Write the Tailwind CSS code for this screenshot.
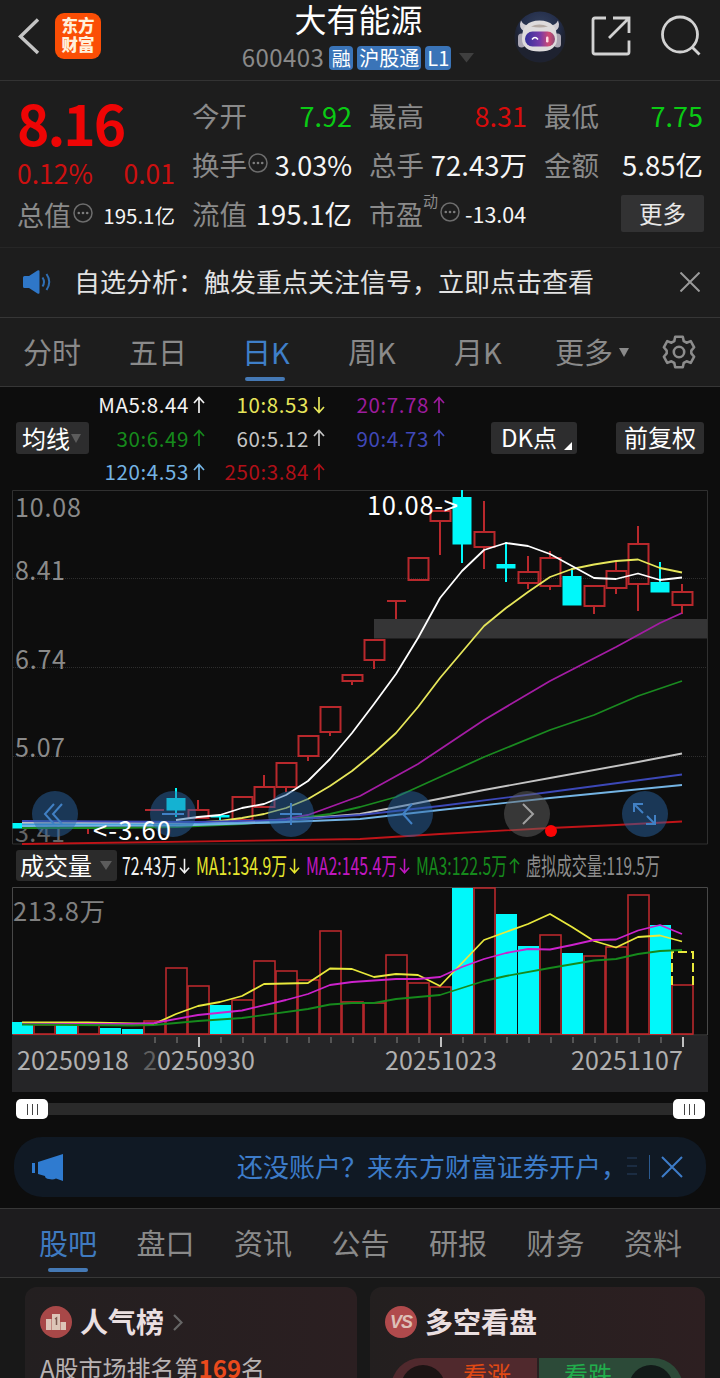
<!DOCTYPE html>
<html lang="zh-CN">

<head>
    <meta charset="UTF-8">
    <meta name="viewport" content="width=device-width, initial-scale=1.0">
    <title>大有能源 600403</title>
    <script src="https://cdn.jsdelivr.net/npm/@tailwindcss/browser@4"></script>
</head>

<body class="w-[720px] h-[1378px] overflow-hidden bg-[#0d0d0d] font-['Noto_Sans_CJK_SC',sans-serif] text-white whitespace-nowrap">

    <!-- Shared arrows -->
    <svg class="hidden">
        <symbol id="up" viewBox="0 0 12 18"><path d="M6 17V1.5M1 7l5-5.5L11 7" fill="none" stroke="currentColor" stroke-width="1.7" /></symbol>
        <symbol id="down" viewBox="0 0 12 18"><path d="M6 1v15.5M1 11l5 5.5 5-5.5" fill="none" stroke="currentColor" stroke-width="1.7" /></symbol>
        <symbol id="dots" viewBox="0 0 20 20">
            <circle cx="10" cy="10" r="9" fill="none" stroke="#6d6d6d" stroke-width="1.5" />
            <g fill="#7d7d7d"><circle cx="5.8" cy="10" r="1.3" /><circle cx="10" cy="10" r="1.3" /><circle cx="14.2" cy="10" r="1.3" /></g>
        </symbol>
    </svg>

    <!-- Header -->
    <header class="h-[81px] bg-[#1d1d1d] border-b border-[#333] flex justify-between">
        <div class="w-[203px] pl-[17px] pt-[13px] flex items-start">
            <svg class="w-6 h-[46px]" viewBox="0 0 24 46" fill="none" stroke="#c4c4c4" stroke-width="3.4"><path d="M21 6.5L3.5 23.5 21 40" /></svg>
            <div class="ml-[14px] w-[46px] h-[46px] rounded-[9px] bg-[#fb4e05] text-[#fff1dc] font-black text-[16.5px] leading-[19px] text-center pt-[3px]">东方<br>财富</div>
        </div>
        <div class="flex flex-col items-center">
            <h1 class="text-[32px] leading-[37px]">大有能源</h1>
            <div class="flex items-center h-[42px] ml-[-1px]">
                <span class="text-[24px] leading-[38px] -mt-[2px] tracking-[0.45px] text-[#8a8a8a]">600403</span>
                <span class="ml-[5px] h-6 w-6 rounded-[4px] bg-[#3a74b8] text-[19px] leading-[23px] text-center">融</span>
                <span class="ml-[4px] h-6 w-[64px] rounded-[4px] bg-[#3a74b8] text-[20px] leading-[23px] text-center">沪股通</span>
                <span class="ml-[4px] h-6 w-[26px] rounded-[4px] bg-[#3a74b8] text-[20px] leading-[23px] text-center">L1</span>
                <svg class="ml-[8px] w-[15px] h-[10px]" viewBox="0 0 15 10"><path d="M0 0h15L7.500 9.500z" fill="#3f3f3f" /></svg>
            </div>
        </div>
        <div class="w-[206px] flex items-start pt-[10px]">
            <svg class="w-[54px] h-[54px] -ml-[1px]" viewBox="0 0 54 54">
                <defs>
                    <linearGradient id="visor" x1="0" x2="1"><stop offset="0" stop-color="#33309a" /><stop offset=".5" stop-color="#763aa8" /><stop offset=".8" stop-color="#d04a72" /><stop offset="1" stop-color="#8a4a78" /></linearGradient>
                    <radialGradient id="halo" cy=".3"><stop offset="0" stop-color="#35425f" /><stop offset=".75" stop-color="#232d49" /><stop offset="1" stop-color="#1e2230" /></radialGradient>
                </defs>
                <circle cx="27" cy="27" r="25.500" fill="url(#halo)" />
                <g transform="translate(0 1.500)">
                    <path d="M8 9q-3 7 3 11l7-6q-7 1-10-5zM45 9q3 7-3 11l-7-6q7 1 10-5z" fill="#cfccd2" />
                    <rect x="5" y="22" width="7" height="14" rx="3.500" fill="#aaa6b2" />
                    <rect x="41" y="22" width="7" height="14" rx="3.500" fill="#aaa6b2" />
                    <path d="M9 27Q9 9 26.500 9 44 9 44 27 44 40 26.500 40 9 40 9 27z" fill="#dedbdc" />
                    <path d="M18 15q8-4 17 0-8 2-17 0z" fill="#b5aaa4" />
                    <rect x="12" y="20" width="30" height="15" rx="7.500" fill="url(#visor)" />
                    <path d="M19 28q3-4 6 0" fill="none" stroke="#fff" stroke-width="1.500" />
                    <rect x="33" y="25" width="2.500" height="6" rx="1.200" fill="#ffd8e2" />
                </g>
            </svg>
            <svg class="ml-[23px] mt-[5px] w-[42px] h-[42px]" viewBox="0 0 42 42" fill="none" stroke="#d2d2d2" stroke-width="2.800">
                <path d="M16 3H5q-2 0-2 2v32q0 2 2 2h32q2 0 2-2V25.500M23 3h16v15M38.500 3.500L19 23" />
            </svg>
            <svg class="ml-[28px] mt-[5px] w-[42px] h-[42px]" viewBox="0 0 42 42" fill="none" stroke="#d2d2d2" stroke-width="2.800">
                <circle cx="20" cy="19.500" r="17.500" /><path d="M32 32l7.500 7.500" />
            </svg>
        </div>
    </header>

    <!-- Quote -->
    <section class="h-[167px] bg-[#1d1d1d] border-b border-[#262626] pt-[10px] pl-[17px] grid grid-cols-[158px_160px_158px_159px] gap-x-[17px] text-[27px] leading-[49px] text-[#8a8a8a] content-start">
        <div>
            <div class="text-[55px] leading-[62px] font-bold text-[#ee0505] tracking-[-2px]">8.16</div>
            <div class="flex justify-between leading-[40px] text-[26.5px] text-[#cc1010]"><span>0.12%</span><span>0.01</span></div>
            <div class="flex items-center justify-between leading-[44px]"><span class="flex items-center">总值<svg class="w-5 h-5 ml-[2px] -mt-1"><use href="#dots" /></svg></span><span class="text-[20.5px] text-[#f5f5f5]">195.1亿</span></div>
        </div>
        <div>
            <div class="flex justify-between"><span class="text-[27.5px]">今开</span><span class="text-[#0acb14]">7.92</span></div>
            <div class="flex items-center justify-between"><span class="flex items-center text-[27.5px]">换手<svg class="w-5 h-5 ml-[1px] -mt-1"><use href="#dots" /></svg></span><span class="text-[#f5f5f5]">3.03%</span></div>
            <div class="flex justify-between"><span class="text-[27.5px]">流值</span><span class="text-[27.5px] text-[#f5f5f5]">195.1亿</span></div>
        </div>
        <div>
            <div class="flex justify-between"><span class="text-[27.5px]">最高</span><span class="text-[#d80c0c]">8.31</span></div>
            <div class="flex justify-between"><span class="text-[27.5px]">总手</span><span class="text-[27.5px] text-[#f5f5f5]">72.43万</span></div>
            <div class="flex items-center"><span>市盈</span><span class="self-start text-[15px] leading-[24px]">动</span><svg class="w-5 h-5 ml-[2px] -mt-1"><use href="#dots" /></svg><span class="text-[21.5px] ml-[5px] text-[#f5f5f5]">-13.04</span></div>
        </div>
        <div>
            <div class="flex justify-between"><span class="text-[27.5px]">最低</span><span class="text-[#0acb14]">7.75</span></div>
            <div class="flex justify-between"><span class="text-[27.5px]">金额</span><span class="text-[27.5px] text-[#f5f5f5]">5.85亿</span></div>
            <button class="block ml-auto mt-[6px] -mr-px w-[83px] h-[37px] rounded-[2px] bg-[#323233] text-[#e8e8e8] text-[23.5px] leading-[35px]">更多</button>
        </div>
    </section>

    <!-- Notice -->
    <section class="h-[70px] bg-[#1d1d1d] border-b border-[#363636] flex items-center pl-[22px] pr-[20px]">
        <svg class="w-[30px] h-[26px] -mt-[2px]" viewBox="0 0 30 26">
            <path d="M1 8.500q0-1.500 1.500-1.500H7L15.500 1.500q2-1 2 1v21q0 2-2 1L7 19H2.500Q1 19 1 17.500z" fill="#2f77c8" />
            <path d="M20.500 8.500q3 4.500 0 9M24.500 5q5.500 8 0 16" fill="none" stroke="#2f6fb5" stroke-width="2" />
        </svg>
        <p class="ml-[22px] -mt-[4px] text-[26px] text-[#e2e2e2]">自选分析：触发重点关注信号，立即点击查看</p>
        <svg class="ml-auto -mt-[2px] w-5 h-5" viewBox="0 0 20 20" stroke="#999" stroke-width="2"><path d="M.5.5l19 19M19.500.5l-19 19" /></svg>
    </section>

    <!-- Period tabs -->
    <nav class="h-[69px] bg-[#1d1d1d] border-b border-[#363636] flex items-center pl-[23px] text-[29px] leading-[66px] text-[#8a8a8a]">
        <span class="-mt-[2px] w-[106px]">分时</span>
        <span class="-mt-[2px] w-[113px]">五日</span>
        <span class="-mt-[2px] relative w-[106px] text-[#3f7fc9]">日K<i class="absolute left-[3px] bottom-[3px] w-10 h-1 rounded-full bg-[#4579b5]"></i></span>
        <span class="-mt-[2px] w-[106px]">周K</span>
        <span class="-mt-[2px] w-[101px]">月K</span>
        <span class="-mt-[2px]">更多</span>
        <svg class="ml-[6px] w-[10px] h-[9px]" viewBox="0 0 10 9"><path d="M0 0h10L5 9z" fill="#8a8a8a" /></svg>
        <svg class="ml-[31px] w-[38px] h-[36px]" viewBox="-20 -19 40 38" fill="none" stroke="#8c8c8c" stroke-width="2.700" stroke-linejoin="round">
            <path d="M-4-16H4L5-11.500 8-9.800 12.400-11.500 16-5 13-1.500V1.500L16 5 12.400 11.500 8 9.800 5 11.500 4 16H-4L-5 11.500-8 9.800-12.400 11.500-16 5-13 1.500V-1.500L-16-5-12.400-11.500-8-9.800-5-11.500z" />
            <circle r="5.500" />
        </svg>
    </nav>

    <!-- Moving average legend -->
    <section class="h-[103px] flex items-start">
        <div class="ml-4 mt-[35px] w-[73px] h-[32px] rounded-[3px] bg-[#2d2d2e] flex items-center pl-[6px] text-[24px] leading-[30px]">均线<svg class="ml-[1px] w-[10px] h-[9px]" viewBox="0 0 10 9"><path d="M0 0h10L5 9z" fill="#5c5c5c" /></svg></div>
        <div class="ml-[1px] mt-[1px] grid grid-cols-[115px_120px_120px] text-[20.5px] leading-[33.5px] tracking-[0.6px]">
            <span class="flex items-center justify-end gap-1 text-[#f2f2f2]">MA5:8.44<svg class="w-3 h-[18px]"><use href="#up" /></svg></span>
            <span class="flex items-center justify-end gap-1 text-[#e6e65a]">10:8.53<svg class="w-3 h-[18px]"><use href="#down" /></svg></span>
            <span class="flex items-center justify-end gap-1 text-[#9d1c9d]">20:7.78<svg class="w-3 h-[18px]"><use href="#up" /></svg></span>
            <span class="flex items-center justify-end gap-1 text-[#168a1c]">30:6.49<svg class="w-3 h-[18px]"><use href="#up" /></svg></span>
            <span class="flex items-center justify-end gap-1 text-[#c4c4c4]">60:5.12<svg class="w-3 h-[18px]"><use href="#up" /></svg></span>
            <span class="flex items-center justify-end gap-1 text-[#4048b8]">90:4.73<svg class="w-3 h-[18px]"><use href="#up" /></svg></span>
            <span class="flex items-center justify-end gap-1 text-[#74b4e4]">120:4.53<svg class="w-3 h-[18px]"><use href="#up" /></svg></span>
            <span class="flex items-center justify-end gap-1 text-[#b01018]">250:3.84<svg class="w-3 h-[18px]"><use href="#up" /></svg></span>
        </div>
        <div class="relative ml-[46px] mt-[35px] w-[86px] h-[32px] rounded-[3px] bg-[#2d2d2e] pl-[10px] text-[24px] leading-[30px]">DK点<svg class="absolute right-[5px] bottom-1 w-[8px] h-[8px]" viewBox="0 0 8 8"><path d="M8 0v8H0z" fill="#fff" /></svg></div>
        <div class="ml-[39px] mt-[35px] w-[88px] h-[32px] rounded-[3px] bg-[#2d2d2e] text-center text-[24px] leading-[30px]">前复权</div>
    </section>

    <!-- Candles -->
    <svg class="block w-[720px] h-[356px]" viewBox="0 490 720 356">
        <path d="M12.500 844V490.500H707.500V844z" fill="none" stroke="#303030" />
        <path d="M13 578.500H707M13 667.500H707M13 756.500H707" stroke="#2e2e2e" stroke-dasharray="1 1" />
        <g fill="#8a8a8a" font-size="25">
            <text x="15" y="517" textLength="66">10.08</text>
            <text x="15" y="580" textLength="50">8.41</text>
            <text x="15" y="669" textLength="51">6.74</text>
            <text x="15" y="757" textLength="50">5.07</text>
            <text x="15" y="842" textLength="50" fill="#666">3.41</text>
        </g>
        <rect x="374" y="619" width="333" height="19.500" fill="#353536" />
        <g id="candles"></g>
        <g id="averages"></g>
        <g fill="#2a67a8" fill-opacity=".48">
            <circle cx="55" cy="814" r="23" /><circle cx="173" cy="814" r="23" /><circle cx="291" cy="814" r="23" /><circle cx="410" cy="814" r="23" />
            <circle cx="527" cy="814" r="23" fill="#666" /><circle cx="645" cy="814" r="23" />
        </g>
        <g fill="none" stroke="#4180c4" stroke-width="2">
            <path d="M54 804l-9 10 9 10M62 804l-9 10 9 10M162 814h22M280 814h22M291 803v22M412 804l-9 10 9 10" />
            <path d="M523 804l10 10-10 10" stroke="#a0a0a0" />
            <path d="M634 812v-8h9M635 805l8 8M655 815v9h-9M655 824l-8-8" />
        </g>
        <circle cx="551" cy="831" r="6" fill="#fb0505" />
        <g font-size="25.500" fill="#fff">
            <text x="367" y="515" textLength="91">10.08-&gt;</text>
            <text x="93" y="840" textLength="78">&lt;-3.60</text>
        </g>
    </svg>

    <!-- Volume legend -->
    <section class="h-[41px] flex items-start">
        <div class="ml-4 mt-[4px] w-[101px] h-[31px] rounded-[3px] bg-[#2b2b2b] flex items-center pl-[4px] text-[24px] leading-[28px]"><span class="-mt-[2px]">成交量</span><svg class="ml-[8px] w-[12px] h-[9px]" viewBox="0 0 12 9"><path d="M0 0h12L6 9z" fill="#5c5c5c" /></svg></div>
        <svg class="w-[603px] h-[41px]" viewBox="117 846 603 41" font-size="24">
            <g fill="#f2f2f2" color="#f2f2f2"><text x="122" y="875" textLength="55" lengthAdjust="spacingAndGlyphs">72.43万</text><use href="#down" x="179" y="856" width="11" height="20" /></g>
            <g fill="#e6e62e" color="#e6e62e"><text x="196" y="875" textLength="91" lengthAdjust="spacingAndGlyphs">MA1:134.9万</text><use href="#down" x="289" y="856" width="11" height="20" /></g>
            <g fill="#c018c0" color="#c018c0"><text x="306" y="875" textLength="91" lengthAdjust="spacingAndGlyphs">MA2:145.4万</text><use href="#down" x="399" y="856" width="11" height="20" /></g>
            <g fill="#168a1c" color="#168a1c"><text x="416" y="875" textLength="91" lengthAdjust="spacingAndGlyphs">MA3:122.5万</text><use href="#up" x="509" y="856" width="11" height="20" /></g>
            <text x="526" y="875" textLength="134" lengthAdjust="spacingAndGlyphs" fill="#8e8e8e">虚拟成交量:119.5万</text>
        </svg>
    </section>

    <!-- Volume -->
    <svg class="block w-[720px] h-[205px]" viewBox="0 887 720 205">
        <path d="M12.500 1035V887.500H707.500V1035z" fill="none" stroke="#484848" />
        <text x="13" y="921" font-size="25.500" fill="#808080" textLength="92">213.8万</text>
        <g id="volumes"></g>
        <path d="M672 985V952H693V985" fill="none" stroke="#e8e83c" stroke-width="2" stroke-dasharray="9 4" />
        <g id="volumeAverages"></g>
        <rect x="12" y="1036" width="696" height="57" fill="#252527" />
        <g id="ticks"></g>
        <g fill="#b0b0b0" font-size="25">
            <text x="17" y="1070" textLength="112">20250918</text>
            <text x="143" y="1070" textLength="112"><tspan fill="#606060">2</tspan>0250930</text>
            <text x="385" y="1070" textLength="112">20251023</text>
            <text x="571" y="1070" textLength="112">20251107</text>
        </g>
    </svg>

    <!-- Range slider -->
    <div class="h-[45px] pt-[7px]">
        <div class="ml-4 w-[689px] h-5 flex items-center">
            <div class="w-8 h-5 rounded-[5px] bg-white flex items-center justify-center gap-[4px]"><i class="w-px h-[11px] bg-[#444]"></i><i class="w-px h-[11px] bg-[#444]"></i><i class="w-px h-[11px] bg-[#444]"></i></div>
            <div class="flex-1 h-3 bg-[#2a2a2a]"></div>
            <div class="w-8 h-5 rounded-[5px] bg-white flex items-center justify-center gap-[4px]"><i class="w-px h-[11px] bg-[#444]"></i><i class="w-px h-[11px] bg-[#444]"></i><i class="w-px h-[11px] bg-[#444]"></i></div>
        </div>
    </div>

    <!-- Promo -->
    <div class="ml-[14px] w-[692px] h-[60px] rounded-[28px] bg-[#101924] flex items-center text-[#3d7cc9]">
        <svg class="ml-[18px] w-[31px] h-[27px]" viewBox="0 0 31 27" fill="#2f7bd0"><path d="M0 9h3v10H0zM6 8L31 0v27l-7-2.500q-3 1.500-7 .5-4-.5-4-3L6 20z" /></svg>
        <span class="ml-[174px] -mt-[4px] text-[26px]">还没账户？来东方财富证券开户，</span>
        <span class="w-[10px] h-5 bg-[repeating-linear-gradient(#1b2c42_0_2px,#101924_2px_8px)]"></span>
        <i class="ml-[12px] w-px h-6 bg-[#2b5a90]"></i>
        <svg class="ml-[11px] w-[22px] h-[22px]" viewBox="0 0 22 22" stroke="#3d7cc9" stroke-width="2"><path d="M1 1l20 20M21 1L1 21" /></svg>
    </div>

    <!-- Info tabs -->
    <nav class="mt-[11px] h-[70px] bg-[#1d1c1e] border-y border-[#373737] flex pl-[39px] text-[29px] leading-[66px] text-[#8a8a8a]">
        <span class="relative w-[97.5px] text-[#3f7ac0]">股吧<i class="absolute left-[9px] bottom-[5px] w-10 h-1 rounded-full bg-[#4579b5]"></i></span>
        <span class="w-[97.5px]">盘口</span>
        <span class="w-[97.5px]">资讯</span>
        <span class="w-[97.5px]">公告</span>
        <span class="w-[97.5px]">研报</span>
        <span class="w-[97.5px]">财务</span>
        <span>资料</span>
    </nav>

    <!-- Cards -->
    <section class="h-[100px] bg-[#181818] pt-[9px] pl-[25px] flex gap-[13px]">
        <div class="w-[332px] h-[120px] rounded-t-[12px] bg-linear-to-r from-[#231f20] to-[#2b1f21] pl-[15px] pt-[15px]">
            <div class="flex items-center h-[40px]">
                <svg class="w-8 h-8" viewBox="0 0 32 32"><circle cx="16" cy="16" r="16" fill="#a84848" /><path d="M6 13h5.500v11H6zM12 8h8v16h-8zM20.500 16H26v8h-5.500z" fill="#ddc5b8" /><path d="M15 13l1.500-1v7" fill="none" stroke="#7d5a50" stroke-width="1.500" /></svg>
                <span class="ml-[8px] -mt-[2px] text-[28px] font-bold text-[#eadfe0]">人气榜</span>
                <svg class="ml-[9px] w-[10px] h-[17px]" viewBox="0 0 10 17" fill="none" stroke="#666" stroke-width="2.200"><path d="M1 1l7.500 7.500L1 16" /></svg>
            </div>
            <p class="mt-[9px] text-[24px] leading-[34px] text-[#b8b2b2]">A股市场排名第<b class="text-[#ea4a1c]">169</b>名</p>
        </div>
        <div class="w-[335px] h-[120px] rounded-t-[12px] bg-linear-to-r from-[#231f1f] to-[#2d1f21] pl-[15px] pt-[15px]">
            <div class="flex items-center h-[40px]">
                <div class="w-8 h-8 rounded-full bg-[#b04a4c] text-[#ddc0b8] text-[18px] leading-[32px] text-center font-bold italic tracking-[-1px] font-['Liberation_Sans',sans-serif]">VS</div>
                <span class="ml-[8px] -mt-[2px] text-[28px] font-bold text-[#eadfe0]">多空看盘</span>
            </div>
            <div class="mt-[16px] ml-[6px] w-[292px] h-[60px] flex text-[24px] leading-[32px]">
                <div class="relative w-[146px] rounded-tl-[30px] bg-[#50292d] pl-[72px] text-[#e04a14]">看涨<i class="absolute left-[10px] top-[7px] w-[44px] h-[44px] rounded-full bg-[#1c1414]"></i></div>
                <div class="relative ml-[2px] w-[144px] rounded-tr-[30px] bg-[#2c4a38] pl-[25px] text-[#22ae4c]">看跌<i class="absolute right-[10px] top-[7px] w-[44px] h-[44px] rounded-full bg-[#121a18]"></i></div>
            </div>
        </div>
    </section>

    <script>
        const RED = '#b8282c';
        const CYAN = '#00f8fa';

        // x, body top, body bottom, high, low, falling
        const candles = [
            [22, 823, 828, 823, 828, 1], [88, 829, 829, 829, 834, 0], [154, 810, 810, 810, 810, 0], [176, 798, 810, 788, 817, 1],
            [198, 810, 818, 800, 818, 0], [220, 815, 817, 815, 820, 1], [242, 797, 820, 797, 820, 0], [264, 787, 807, 775, 807, 0],
            [286, 763, 787, 763, 792, 0], [308, 736, 756, 736, 761, 0], [330, 707, 732, 707, 736, 0], [352, 675, 681, 675, 685, 0],
            [374, 640, 660, 640, 669, 0], [396, 601, 601, 601, 619, 0], [418, 558, 580, 558, 580, 0], [440, 511, 521, 511, 555, 0],
            [462, 497, 544, 490, 563, 1], [484, 532, 547, 501, 569, 0], [506, 564, 568, 542, 582, 1], [528, 572, 583, 556, 589, 0],
            [550, 558, 586, 551, 590, 0], [572, 576, 605, 568, 605, 1], [594, 586, 606, 586, 614, 0], [616, 571, 588, 562, 594, 0],
            [638, 544, 584, 526, 611, 0], [660, 582, 592, 562, 592, 1], [682, 592, 605, 584, 614, 0]
        ];

        document.getElementById('candles').innerHTML = candles.map(([x, top, bottom, high, low, falling]) => {
            const color = falling ? CYAN : RED;
            const wick = `<path d="M${x} ${high}V${top}M${x} ${bottom}V${low}" stroke="${color}" stroke-width="2" />`;
            if (falling) return wick + `<rect x="${x - 9.5}" y="${top}" width="19" height="${bottom - top + 0.5}" fill="${color}" />`;
            if (top === bottom) return wick + (x === 88 ? '' : `<path d="M${x - 9} ${top}h19" stroke="${color}" stroke-width="2" />`);
            return wick + `<rect x="${x - 9.5}" y="${top}" width="20" height="${bottom - top}" fill="none" stroke="${color}" stroke-width="2" />`;
        }).join('');

        const drawLines = (id, lines) => {
            document.getElementById(id).innerHTML = lines.map(([color, points]) =>
                `<polyline points="${points}" fill="none" stroke="${color}" stroke-width="1.8" stroke-linejoin="round" />`).join('');
        };

        drawLines('averages', [
            ['#c01418', '22,844 360,839 440,834 550,828 616,825 682,821.5'],
            ['#a41ca4', '22,825 176,825 242,823 286,819 308,815 330,807 360,796 418,764 484,720 550,681 616,647 660,623 682,613'],
            ['#1a8a20', '22,828 110,828 176,827 242,824 286,820 330,814 360,807 396,797 440,777 484,757 550,730 594,715 638,696 682,681'],
            ['#e6e65a', '176,824 220,821 242,818 264,814 286,808 308,799 330,786 352,771 374,753 396,733 418,707 440,678 462,652 484,626 506,608 528,592 550,577 572,569 594,564.5 616,561 638,559.5 660,568 682,572.5'],
            ['#c4c4c4', '22,823 198,823 286,820 360,814 418,803 484,790 550,778 638,762 682,753.5'],
            ['#3c48b8', '22,821 198,822 286,820 360,815 440,806 550,792 682,774.5'],
            ['#3c9ee0', '22,824.5 180,824.5 286,822'],
            ['#74b4e4', '22,826 180,825.5 286,822 360,819 440,810 550,798 682,785'],
            ['#ffffff', '176,820 198,817 220,815 242,808 264,804 286,795 308,781 330,759 352,733 374,704 396,674 418,638 440,598 462,571 484,550 506,543 528,546 550,554 572,566 594,578 616,579 638,573.5 660,580 682,577.5']
        ]);

        // x, bar top, falling
        const volumes = [
            [22, 1022, 1], [44, 1025, 0], [66, 1025, 1], [88, 1025, 0], [110, 1028, 1], [132, 1029, 1], [154, 1021, 0], [176, 968, 0],
            [198, 986, 0], [220, 1005, 1], [242, 1000, 0], [264, 961, 0], [286, 971, 0], [308, 980, 0], [330, 931, 0], [352, 1002, 0],
            [374, 1003, 0], [396, 955, 0], [418, 983, 0], [440, 987, 0], [462, 888, 1], [484, 888, 0], [506, 914, 1], [528, 946, 1],
            [550, 935, 0], [572, 953, 1], [594, 956, 0], [616, 947, 0], [638, 895, 0], [660, 925, 1], [682, 985, 0]
        ];

        document.getElementById('volumes').innerHTML = '<path d="M13 1034.500H693" stroke="#b8282c" />' + volumes.map(([x, top, falling]) => falling
            ? `<rect x="${x - 10}" y="${top}" width="21" height="${1034 - top}" fill="${CYAN}" />`
            : `<rect x="${x - 10}" y="${top}" width="21" height="${1034 - top}" fill="none" stroke="${RED}" stroke-width="1.6" />`).join('');

        drawLines('volumeAverages', [
            ['#e8e83c', '22,1022.5 88,1022.5 154,1024 176,1014 198,1006 220,1002 242,996 264,984 308,983 330,968.5 352,969 374,977 396,974 418,975 440,986 462,963 484,940 506,932 528,924 550,914 572,927 594,941 616,947.5 638,937 660,935.5 682,941.5'],
            ['#cc22cc', '22,1024 132,1024 154,1023 198,1015 242,1010.5 286,1000 308,994 330,985 352,982 396,979 418,979 440,977 462,967 484,959 506,953 528,949 550,949.5 572,945 594,940 616,939.5 638,930.5 660,925 682,934'],
            ['#168a1c', '22,1024.5 132,1025.5 154,1025 198,1021 242,1018 308,1009 330,1004.5 352,1003 374,1003 396,999 440,995 484,981 506,976 550,968 594,960.5 616,959 638,954 660,951 682,950']
        ]);

        let ticks = '';
        for (let x = 155; x < 690; x += 22) {
            const major = x === 199 || x === 441 || x === 683;
            ticks += `<path d="M${x} 1037v${major ? 10 : 6}" stroke="${major ? '#c0c0c0' : '#6a6a6a'}" stroke-width="${major ? 2 : 1.4}" />`;
        }
        document.getElementById('ticks').innerHTML = ticks;
    </script>
</body>

</html>
